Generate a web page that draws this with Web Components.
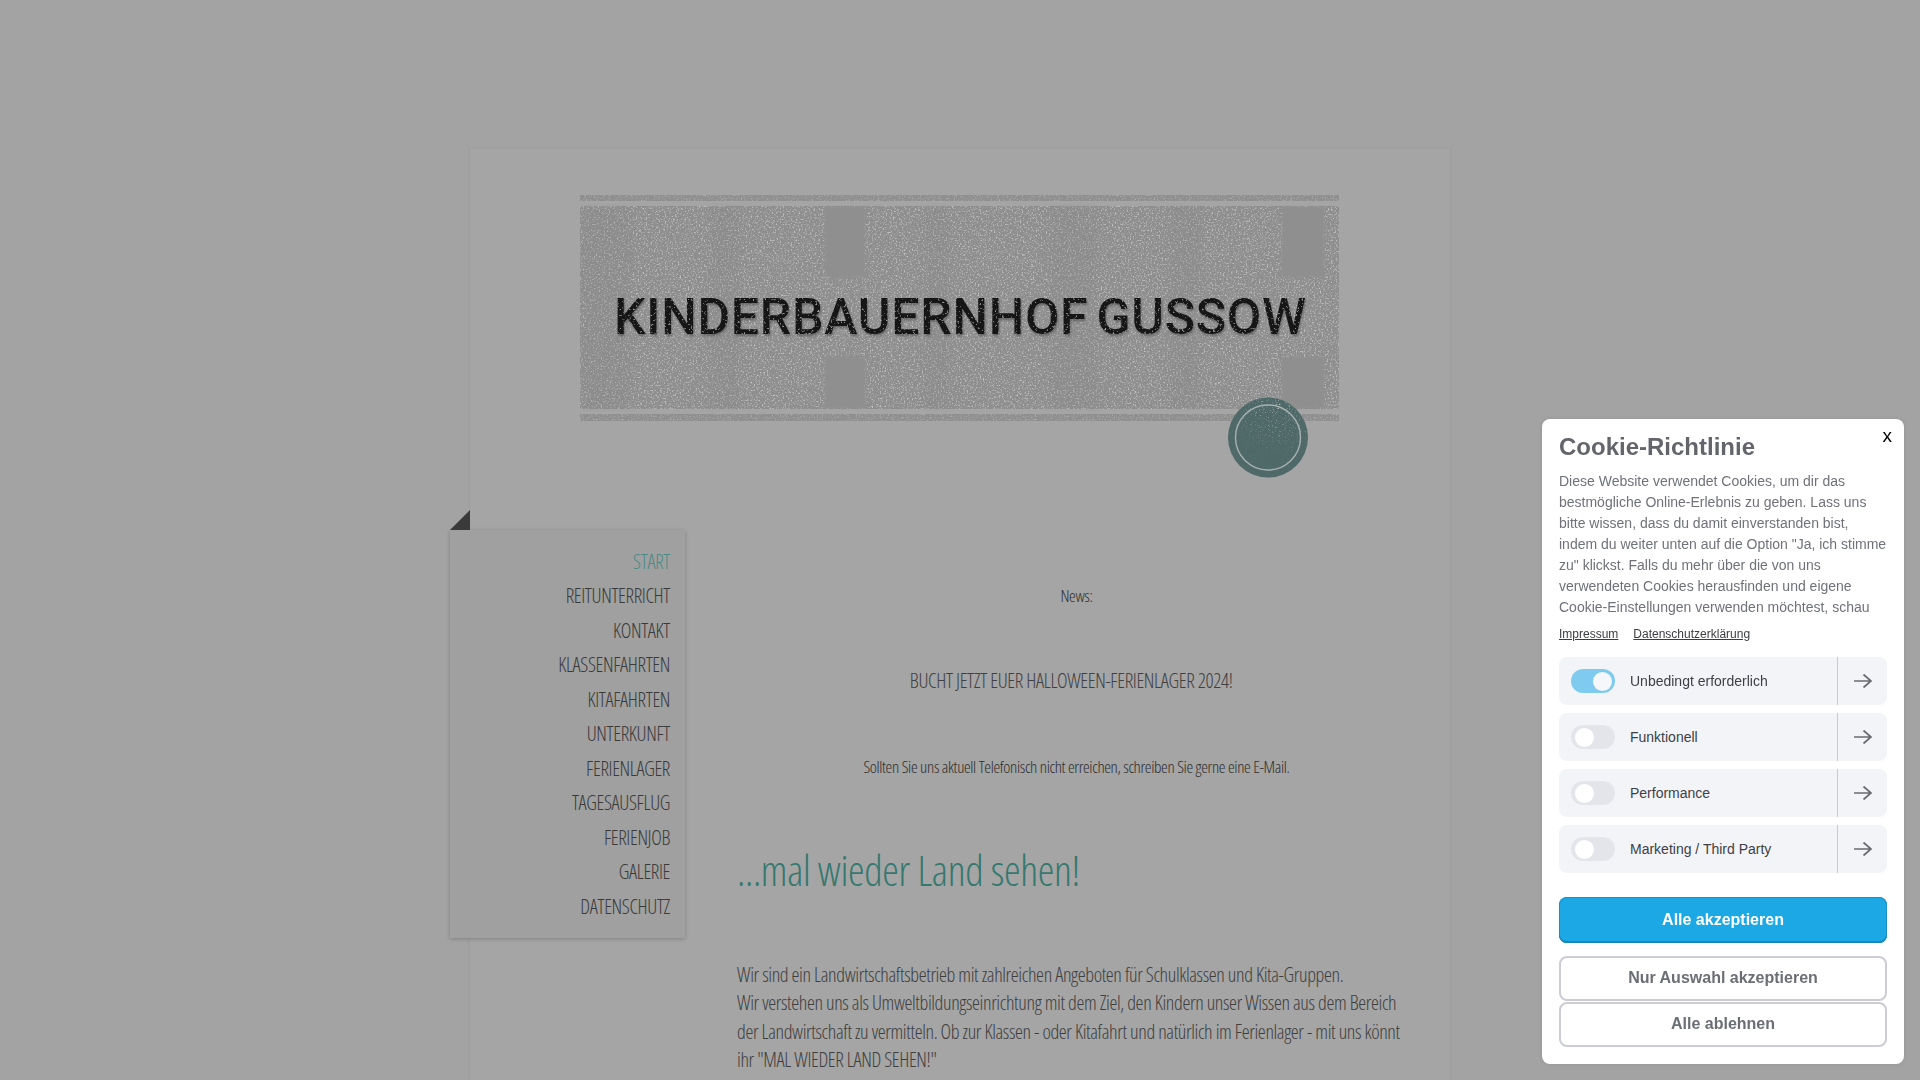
<!DOCTYPE html>
<html lang="de"><head><meta charset="utf-8"><title>Kinderbauernhof Gussow</title>
<style>
html,body{margin:0;height:1080px;overflow:hidden;background:#a3a3a3}
</style></head><body>
<kb-page>
  <kb-banner slot="banner"></kb-banner>
  <kb-nav slot="nav">
    <kb-link active>START</kb-link><kb-link>REITUNTERRICHT</kb-link><kb-link>KONTAKT</kb-link><kb-link>KLASSENFAHRTEN</kb-link><kb-link>KITAFAHRTEN</kb-link><kb-link>UNTERKUNFT</kb-link><kb-link>FERIENLAGER</kb-link><kb-link>TAGESAUSFLUG</kb-link><kb-link>FERIENJOB</kb-link><kb-link>GALERIE</kb-link><kb-link>DATENSCHUTZ</kb-link>
  </kb-nav>
  <kb-content slot="content"></kb-content>
</kb-page>
<cookie-panel>
  <cookie-row on>Unbedingt erforderlich</cookie-row>
  <cookie-row>Funktionell</cookie-row>
  <cookie-row>Performance</cookie-row>
  <cookie-row>Marketing / Third Party</cookie-row>
</cookie-panel>
<script>
const cond='font-family:"Open Sans",sans-serif;font-weight:300;font-stretch:75%;letter-spacing:-.36px;';
class KbPage extends HTMLElement{constructor(){super();this.attachShadow({mode:'open'}).innerHTML=`<style>
:host{display:block;width:980px;height:931px;margin:149px auto 0;box-sizing:border-box;background:#a5a5a5;box-shadow:0 0 3px rgba(0,0,0,.07);padding-top:46px}
.b{margin-left:110px}
.cols{display:flex;margin-top:109px;margin-left:-20px;gap:52px;align-items:flex-start}
</style><div class="b"><slot name="banner"></slot></div><div class="cols"><slot name="nav"></slot><slot name="content"></slot></div>`}}
class KbBanner extends HTMLElement{constructor(){super();this.attachShadow({mode:'open'}).innerHTML=`<style>
:host{display:block;position:relative;width:759px;height:226px}
svg{display:block}
.c{position:absolute;left:648px;top:202px}
text{font-family:Roboto,sans-serif;font-weight:500;font-size:50px;fill:#151515;word-spacing:-5px}
</style>
<svg width="759" height="226" viewBox="0 0 759 226">
<defs>
<filter id="n" x="0" y="0" width="100%" height="100%"><feTurbulence type="fractalNoise" baseFrequency=".62" numOctaves="2" seed="4"/><feColorMatrix values="0 0 0 0 .63 0 0 0 0 .63 0 0 0 0 .63 3.5 0 0 0 -1.8"/><feGaussianBlur stdDeviation=".6"/></filter>
<filter id="t" x="-2%" y="-15%" width="104%" height="135%">
<feTurbulence type="fractalNoise" baseFrequency=".45" numOctaves="2" seed="7" result="g"/>
<feColorMatrix in="g" values="0 0 0 0 .36 0 0 0 0 .36 0 0 0 0 .36 5 0 0 0 -3.1" result="sp"/>
<feGaussianBlur in="sp" stdDeviation=".4" result="sb"/>
<feComposite in="sb" in2="SourceAlpha" operator="in" result="spt"/>
<feGaussianBlur in="SourceAlpha" stdDeviation="1" result="bl"/><feOffset in="bl" dx="1" dy="2" result="of"/>
<feComponentTransfer in="of" result="sh"><feFuncA type="linear" slope=".3"/></feComponentTransfer>
<feMerge><feMergeNode in="sh"/><feMergeNode in="SourceGraphic"/><feMergeNode in="spt"/></feMerge></filter>
<filter id="soft" x="-30%" y="-5%" width="160%" height="110%"><feGaussianBlur stdDeviation="5 2"/></filter>
<filter id="b1" x="-10%" y="-10%" width="120%" height="120%"><feGaussianBlur stdDeviation="1.2"/></filter>
</defs>
<rect width="759" height="226" fill="#a5a5a5"/>
<rect y="0" width="759" height="6" fill="#8f8f8f"/>
<rect y="11" width="759" height="203" fill="#8e8e8e"/>
<rect y="219" width="759" height="7" fill="#8f8f8f"/>
<rect y="0" width="759" height="6" filter="url(#n)" opacity=".45"/>
<rect y="219" width="759" height="7" filter="url(#n)" opacity=".45"/>
<rect y="11" width="759" height="203" filter="url(#n)" opacity=".8"/>
<g fill="#8f8f8f" filter="url(#b1)">
<rect x="245" y="12" width="40" height="70"/><rect x="245" y="162" width="40" height="51"/>
<rect x="702" y="12" width="42" height="70"/><rect x="702" y="162" width="42" height="51"/>
</g>
<g fill="#868686" opacity=".22" filter="url(#soft)">
<rect x="0" y="11" width="50" height="203"/><rect x="130" y="11" width="30" height="203"/><rect x="470" y="11" width="46" height="203"/><rect x="345" y="11" width="24" height="203"/><rect x="590" y="11" width="30" height="203"/>
</g>
<g fill="none" stroke="#a8a8a8" stroke-width="1" opacity=".5">
<path d="M160 65q15-14 28-4t30 2M405 65q15-14 28-4t30 2M620 65q12-12 28-4"/>
<path d="M160 130h60M405 130h60M625 130h55"/>
<rect x="258" y="125" width="16" height="18" rx="5"/><rect x="712" y="125" width="16" height="18" rx="5"/>
</g>
<text x="34" y="139" textLength="692" lengthAdjust="spacing" filter="url(#t)">KINDERBAUERNHOF GUSSOW</text>
</svg>
<kb-seal class="c"></kb-seal>`}}
class KbSeal extends HTMLElement{constructor(){super();this.attachShadow({mode:'open'}).innerHTML=`<style>:host{display:block;width:80px;height:81px}svg{display:block}</style>
<svg width="80" height="81" viewBox="0 0 80 81"><defs>
<filter id="s" x="0" y="0" width="100%" height="100%"><feTurbulence type="fractalNoise" baseFrequency=".7" numOctaves="2" seed="9"/><feColorMatrix values="0 0 0 0 .58 0 0 0 0 .62 0 0 0 0 .62 4 0 0 0 -2.3"/><feGaussianBlur stdDeviation=".4"/></filter>
<radialGradient id="m" cx=".62" cy=".12" r=".6"><stop offset="0" stop-color="#ddd"/><stop offset="1" stop-color="#181818"/></radialGradient>
<mask id="mk"><circle cx="40" cy="40.5" r="40" fill="url(#m)"/></mask></defs>
<circle cx="40" cy="40.5" r="40" fill="#4e6968"/>
<rect width="80" height="81" filter="url(#s)" mask="url(#mk)"/>
<circle cx="40" cy="40.5" r="32.5" fill="none" stroke="#a8b2b1" stroke-width="1.4"/></svg>`}}
class KbNav extends HTMLElement{constructor(){super();this.attachShadow({mode:'open'}).innerHTML=`<style>
:host{display:block;position:relative;width:235px;height:408px;box-sizing:border-box;padding:14.5px 15px 0 0;background:#a0a0a0;box-shadow:0 1px 4px rgba(0,0,0,.22);flex:none}
:host::before{content:"";position:absolute;left:0;top:-20px;width:20px;height:20px;background:#3a3a3a;clip-path:polygon(0 100%,100% 0,100% 100%)}
</style><slot></slot>`}}
class KbLink extends HTMLElement{constructor(){super();this.attachShadow({mode:'open'}).innerHTML=`<style>
:host{display:block;height:34.5px;line-height:34.5px;text-align:right;font-size:20px;${cond}color:#3a3a3a;white-space:nowrap}
:host([active]){color:#4c8a85}
</style><slot></slot>`}}
class KbContent extends HTMLElement{constructor(){super();this.attachShadow({mode:'open'}).innerHTML=`<style>
:host{display:block;width:679px;flex:none;${cond}color:#2e2e2e}
p{margin:0}
.c{text-align:center}
.news{margin-top:52px;font-size:17px;line-height:28px}
.bu{margin-top:57px;font-size:20px;line-height:28px;padding-right:10.5px;color:#404040}
.so{margin-top:58px;font-size:17px;line-height:28px}
h1{margin:64px 0 0;font-size:42px;line-height:50px;font-weight:300;letter-spacing:-.35px;color:#35786f}
.tx{margin-top:65.5px;font-size:20px;line-height:28.5px;color:#3e3e3e}
</style>
<p class="c news">News:</p>
<p class="c bu">BUCHT JETZT EUER HALLOWEEN-FERIENLAGER 2024!</p>
<p class="c so">Sollten Sie uns aktuell Telefonisch nicht erreichen, schreiben Sie gerne eine E-Mail.</p>
<h1>...mal wieder Land sehen!</h1>
<p class="tx">Wir sind ein Landwirtschaftsbetrieb mit zahlreichen Angeboten für Schulklassen und Kita-Gruppen.<br>Wir verstehen uns als Umweltbildungseinrichtung mit dem Ziel, den Kindern unser Wissen aus dem Bereich der Landwirtschaft zu vermitteln. Ob zur Klassen - oder Kitafahrt und natürlich im Ferienlager - mit uns könnt ihr "MAL WIEDER LAND SEHEN!"</p>`}}
class CookieRow extends HTMLElement{constructor(){super();this.attachShadow({mode:'open'}).innerHTML=`<style>
:host{display:flex;align-items:center;height:48px;background:#f3f4f8;border-radius:8px;font-size:14px;color:#3f4046}
.t{position:relative;flex:none;width:44px;height:24px;margin:0 15px 0 12px;border-radius:12px;background:#e3e5eb}
.t::after{content:"";position:absolute;left:3.5px;top:2.5px;width:19px;height:19px;border-radius:50%;background:#fff}
:host([on]) .t{background:#7fcbef}
:host([on]) .t::after{left:22px;background:#f5f7fa}
.l{flex:1}
.a{flex:none;width:49px;height:48px;border-left:1px solid #c9cace;display:flex;align-items:center;justify-content:center}
svg{display:block}
</style><span class="t"></span><span class="l"><slot></slot></span><span class="a"><svg width="19" height="16" viewBox="0 0 19 16" fill="none" stroke="#6a6b72" stroke-width="1.7"><path d="M1 8H18M10.5 1.5L18 8l-7.5 6.5"/></svg></span>`}}
class CookiePanel extends HTMLElement{constructor(){super();this.attachShadow({mode:'open'}).innerHTML=`<style>
:host{position:fixed;right:16px;bottom:16px;width:362px;height:645px;box-sizing:border-box;padding:14px 17px 17px;background:#fff;border-radius:8px;font-family:"Liberation Sans",Arial,sans-serif;box-shadow:0 0 4px rgba(0,0,0,.1);color:#707279}
h2{margin:0;font-size:24px;line-height:28px;font-weight:700;color:#63656b}
.x{position:absolute;right:12px;top:5px;font-size:19px;line-height:24px;color:#000}
.txt{margin-top:9.5px;height:147px;overflow:hidden;font-size:14px;line-height:21px}
.lnk{display:flex;gap:15px;margin-top:9.5px;font-size:12px;line-height:14px;color:#3c3d42;text-decoration:underline}
.rows{display:flex;flex-direction:column;gap:8px;margin-top:16px}
.btns{display:flex;flex-direction:column;margin-top:24px}
.bt{box-sizing:border-box;height:45.5px;display:flex;align-items:center;justify-content:center;border-radius:8px;font-size:16px;font-weight:700;border:2px solid #cbccd4;color:#6c6e75;background:#fff}
.bt.p{height:46px;background:#1ba8e4;border:0;box-shadow:inset 0 -2px 0 #1487bf,inset 0 0 0 1px #1790cc;color:#fff;margin-bottom:13px}
.bt.m{height:44.5px;margin-bottom:1px}
</style>
<span class="x">x</span>
<h2>Cookie-Richtlinie</h2>
<div class="txt">Diese Website verwendet Cookies, um dir das bestmögliche Online-Erlebnis zu geben. Lass uns bitte wissen, dass du damit einverstanden bist, indem du weiter unten auf die Option "Ja, ich stimme zu" klickst. Falls du mehr über die von uns verwendeten Cookies herausfinden und eigene Cookie-Einstellungen verwenden möchtest, schau</div>
<div class="lnk"><span>Impressum</span><span>Datenschutzerklärung</span></div>
<div class="rows"><slot></slot></div>
<div class="btns"><div class="bt p">Alle akzeptieren</div><div class="bt m">Nur Auswahl akzeptieren</div><div class="bt">Alle ablehnen</div></div>`}}
customElements.define('kb-page',KbPage);customElements.define('kb-banner',KbBanner);customElements.define('kb-seal',KbSeal);customElements.define('kb-nav',KbNav);customElements.define('kb-link',KbLink);customElements.define('kb-content',KbContent);customElements.define('cookie-row',CookieRow);customElements.define('cookie-panel',CookiePanel);
</script></body></html>
